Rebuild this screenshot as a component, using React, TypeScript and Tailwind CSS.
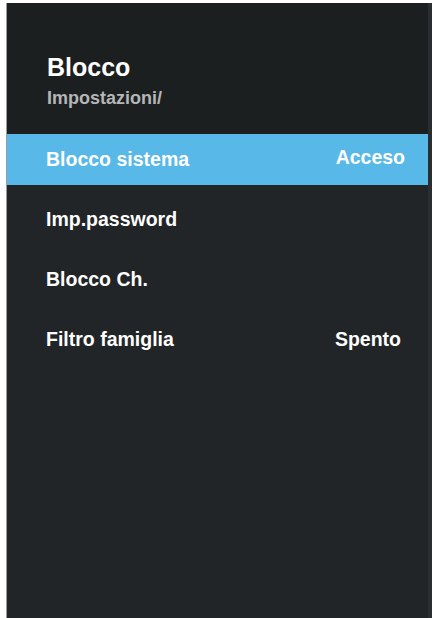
import React from 'react'

interface MenuRow {
  label: string
  value?: string
  selected?: boolean
}

const rows: MenuRow[] = [
  { label: 'Blocco sistema', value: 'Acceso', selected: true },
  { label: 'Imp.password' },
  { label: 'Blocco Ch.' },
  { label: 'Filtro famiglia', value: 'Spento' },
]

export default function App() {
  return (
    <div
      className="w-[432px] h-[618px] bg-white pl-[6px] pt-[3px] overflow-hidden"
      style={{ fontFamily: '"Liberation Sans", Arial, sans-serif' }}
    >
      <div className="h-full flex flex-col bg-[#222527] border-l border-[#9a9c9d] border-r-[4px] border-r-[#2b2e30]">
        {/* Header */}
        <div className="h-[131px] bg-[#1c1f20] pl-[40px] pt-[52px] flex flex-col">
          <div className="text-[25px] leading-none font-bold text-white">Blocco</div>
          <div className="mt-[9px] text-[18px] leading-none font-bold text-[#b4b6b7]">Impostazioni/</div>
        </div>

        {/* Menu list */}
        <div className="flex flex-col gap-[9px]">
          {rows.map((row) => (
            <div
              key={row.label}
              className={
                row.selected
                  ? 'h-[51px] flex items-center justify-between pl-[39px] pr-[23px] bg-[#58b8e7]'
                  : 'h-[51px] flex items-center justify-between pl-[39px] pr-[27px]'
              }
            >
              <span className="text-[19.5px] leading-none font-bold text-white">{row.label}</span>
              {row.value && (
                <span
                  className={
                    row.selected
                      ? 'text-[19.5px] leading-none font-bold text-white -mt-[4px]'
                      : 'text-[19.5px] leading-none font-bold text-white'
                  }
                >
                  {row.value}
                </span>
              )}
            </div>
          ))}
        </div>
      </div>
    </div>
  )
}
